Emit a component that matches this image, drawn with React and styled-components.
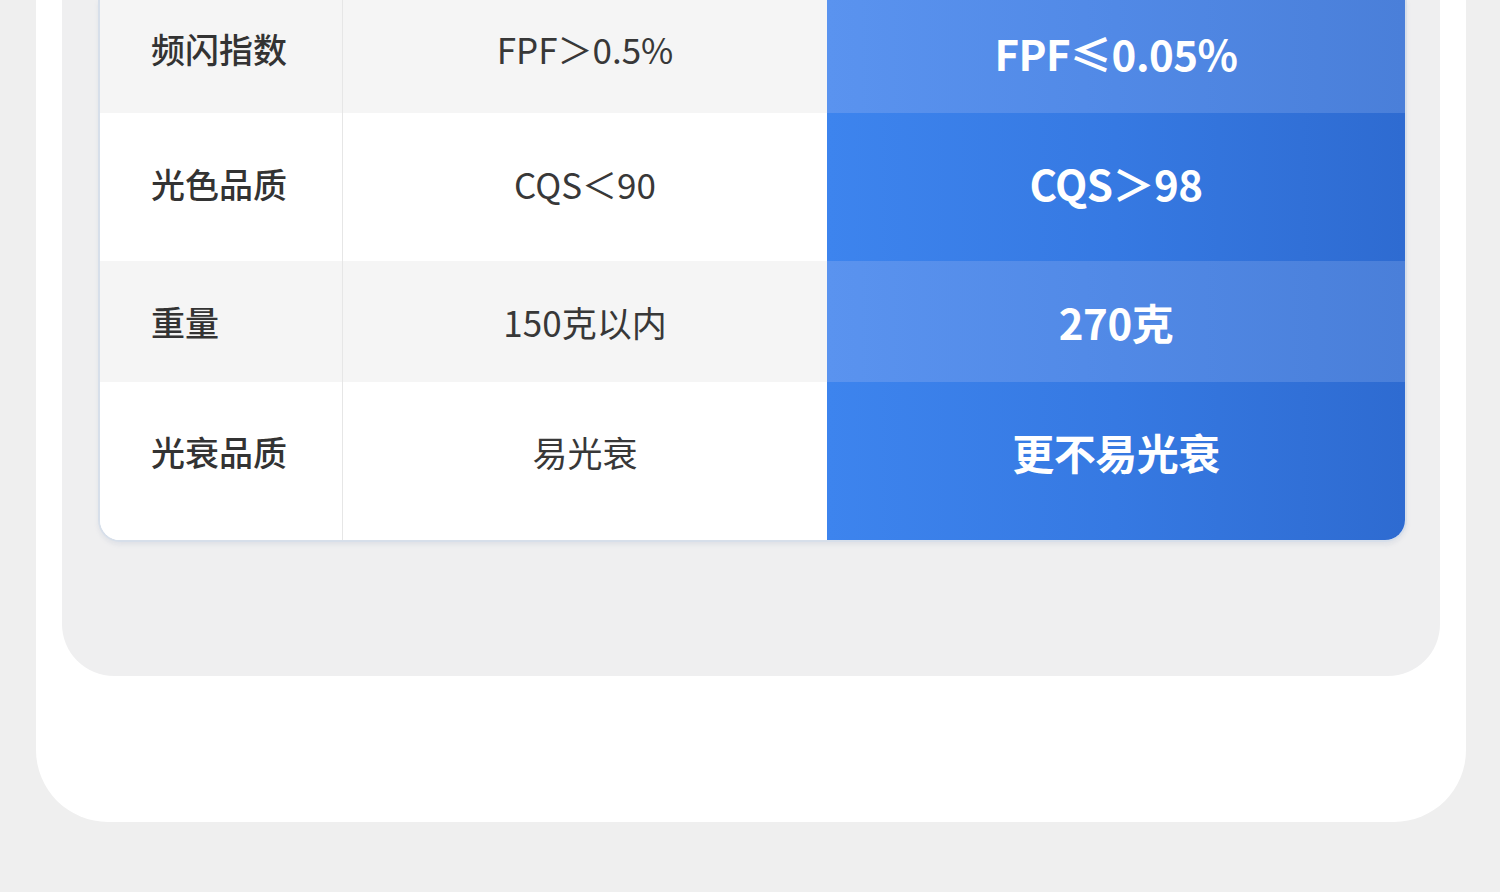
import React from "react";
import styled, { createGlobalStyle } from "styled-components";

const Global = createGlobalStyle`
  html, body { margin: 0; padding: 0; background: #efefef; }
  body { font-family: "Noto Sans CJK SC", "Noto Sans", sans-serif; overflow: hidden; }
`;

const Page = styled.div`
  width: 1500px;
  height: 892px;
  background: #efefef;
  overflow: hidden;
`;

const Card = styled.div`
  margin-left: 36px;
  width: 1430px;
  box-sizing: border-box;
  background: #ffffff;
  border-radius: 0 0 72px 72px;
  padding: 0 26px 146px;
`;

const Panel = styled.div`
  width: 1378px;
  box-sizing: border-box;
  background: #efeff0;
  border-radius: 0 0 52px 52px;
  padding: 0 33px 134px 36px;
`;

const Table = styled.div`
  display: grid;
  grid-template-columns: 243px 484px 1fr;
  border: 2px solid #d7dfea;
  border-top: none;
  border-radius: 0 0 22px 22px;
  overflow: hidden;
  background: #fff;
  box-shadow: 0 3px 4px rgba(120, 140, 170, 0.12);
`;

const Cell = styled.div`
  height: ${(p) => p.$h}px;
  box-sizing: border-box;
  display: flex;
  align-items: center;
  padding-bottom: ${(p) => p.$pb || 0}px;
  background: ${(p) => (p.$alt ? "#f5f5f5" : "#ffffff")};
`;

const Label = styled(Cell)`
  padding-left: 51px;
  border-right: 1px solid #e6e6e6;
  font-size: 34px;
  font-weight: 500;
  color: #333333;
`;

const Normal = styled(Cell)`
  justify-content: center;
  font-size: 35px;
  font-weight: 400;
  color: #383838;
`;

const Highlight = styled(Cell)`
  justify-content: center;
  font-size: 42px;
  font-weight: 700;
  letter-spacing: -0.5px;
  color: #ffffff;
  background: ${(p) =>
    p.$alt
      ? "linear-gradient(90deg, #5a93ef 0%, #5189e6 50%, #4a7fd9 100%)"
      : "linear-gradient(90deg, #3d84ee 0%, #3679e2 50%, #2e6bd1 100%)"};
`;

const rows = [
  { label: "频闪指数", normal: "FPF＞0.5%", best: "FPF≤0.05%", h: 113, pb: 16, alt: true, bpb: 8 },
  { label: "光色品质", normal: "CQS＜90", best: "CQS＞98", h: 148, pb: 8, alt: false, bpb: 10 },
  { label: "重量", normal: "150克以内", best: "270克", h: 121, pb: 0, alt: true, bpb: 0 },
  { label: "光衰品质", normal: "易光衰", best: "更不易光衰", h: 158, pb: 20, alt: false, bpb: 20 },
];

export default function App() {
  return (
    <Page>
      <Global />
      <Card>
        <Panel>
          <Table>
            {rows.map((r) => (
              <React.Fragment key={r.label}>
                <Label $h={r.h} $pb={r.pb} $alt={r.alt}>{r.label}</Label>
                <Normal $h={r.h} $pb={r.pb} $alt={r.alt}>{r.normal}</Normal>
                <Highlight $h={r.h} $pb={r.bpb} $alt={r.alt}>{r.best}</Highlight>
              </React.Fragment>
            ))}
          </Table>
        </Panel>
      </Card>
    </Page>
  );
}
